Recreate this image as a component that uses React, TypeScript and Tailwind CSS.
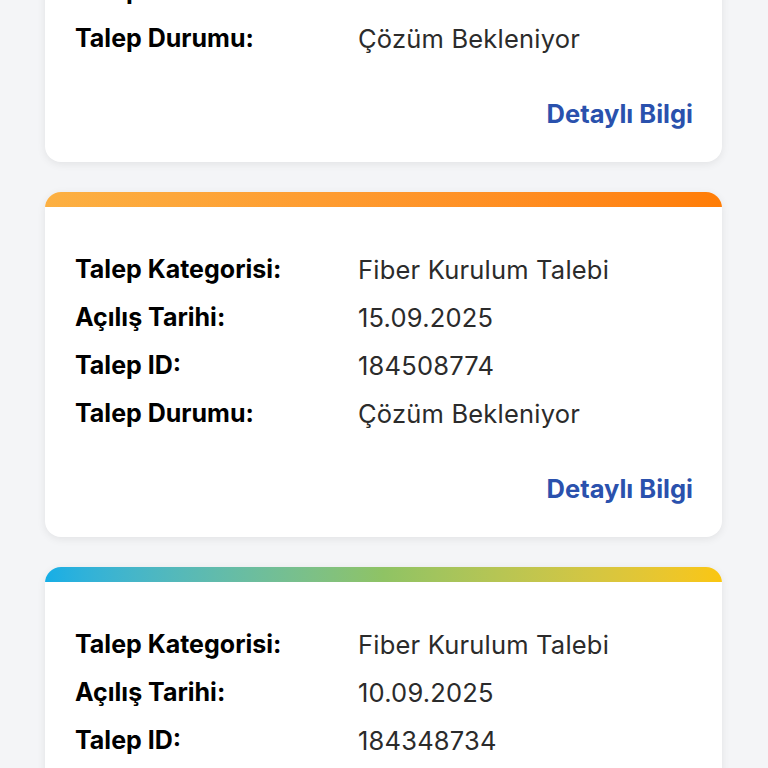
import React from 'react';

type Ticket = {
  category: string;
  opened: string;
  id: string;
  status: string;
  strip: string;
};

const tickets: Ticket[] = [
  {
    category: 'Fiber Kurulum Talebi',
    opened: '18.09.2025',
    id: '184678966',
    status: 'Çözüm Bekleniyor',
    strip: 'bg-gradient-to-r from-[#1bb0e6] via-[#8cc26a] to-[#f8c60f]',
  },
  {
    category: 'Fiber Kurulum Talebi',
    opened: '15.09.2025',
    id: '184508774',
    status: 'Çözüm Bekleniyor',
    strip: 'bg-gradient-to-r from-[#fcb042] to-[#ff7d06]',
  },
  {
    category: 'Fiber Kurulum Talebi',
    opened: '10.09.2025',
    id: '184348734',
    status: 'Çözüm Bekleniyor',
    strip: 'bg-gradient-to-r from-[#14aee6] via-[#8fc364] to-[#fac60e]',
  },
];

function Row({ label, value }: { label: string; value: string }) {
  return (
    <div className="flex h-12 items-center">
      <span className="w-[283px] shrink-0 text-[25px] font-bold tracking-[0px] text-black">{label}</span>
      <span className="text-[25.5px] tracking-[0.2px] text-[#2b2b2b]">{value}</span>
    </div>
  );
}

function TicketCard({ t }: { t: Ticket }) {
  return (
    <div className="h-[345px] overflow-hidden rounded-[16px] bg-white shadow-[0_2px_8px_rgba(0,0,0,0.08)]">
      <div className={`h-[15px] ${t.strip}`} />
      <div className="px-[30px] pt-[39px]">
        <Row label="Talep Kategorisi:" value={t.category} />
        <Row label="Açılış Tarihi:" value={t.opened} />
        <Row label="Talep ID:" value={t.id} />
        <Row label="Talep Durumu:" value={t.status} />
      </div>
      <div className="mt-[27px] flex h-12 items-center justify-end pr-[29px]">
        <button className="text-[25.5px] font-bold text-[#2a51ad]">Detaylı Bilgi</button>
      </div>
    </div>
  );
}

export default function App() {
  return (
    <div
      className="h-[768px] overflow-hidden bg-[#f4f5f7]"
      style={{ fontFamily: 'Inter, "Noto Sans", sans-serif' }}
    >
      <div className="mt-[-183px] flex flex-col gap-[30px] pl-[45px] pr-[46px]">
        {tickets.map((t) => (
          <TicketCard key={t.id} t={t} />
        ))}
      </div>
    </div>
  );
}
